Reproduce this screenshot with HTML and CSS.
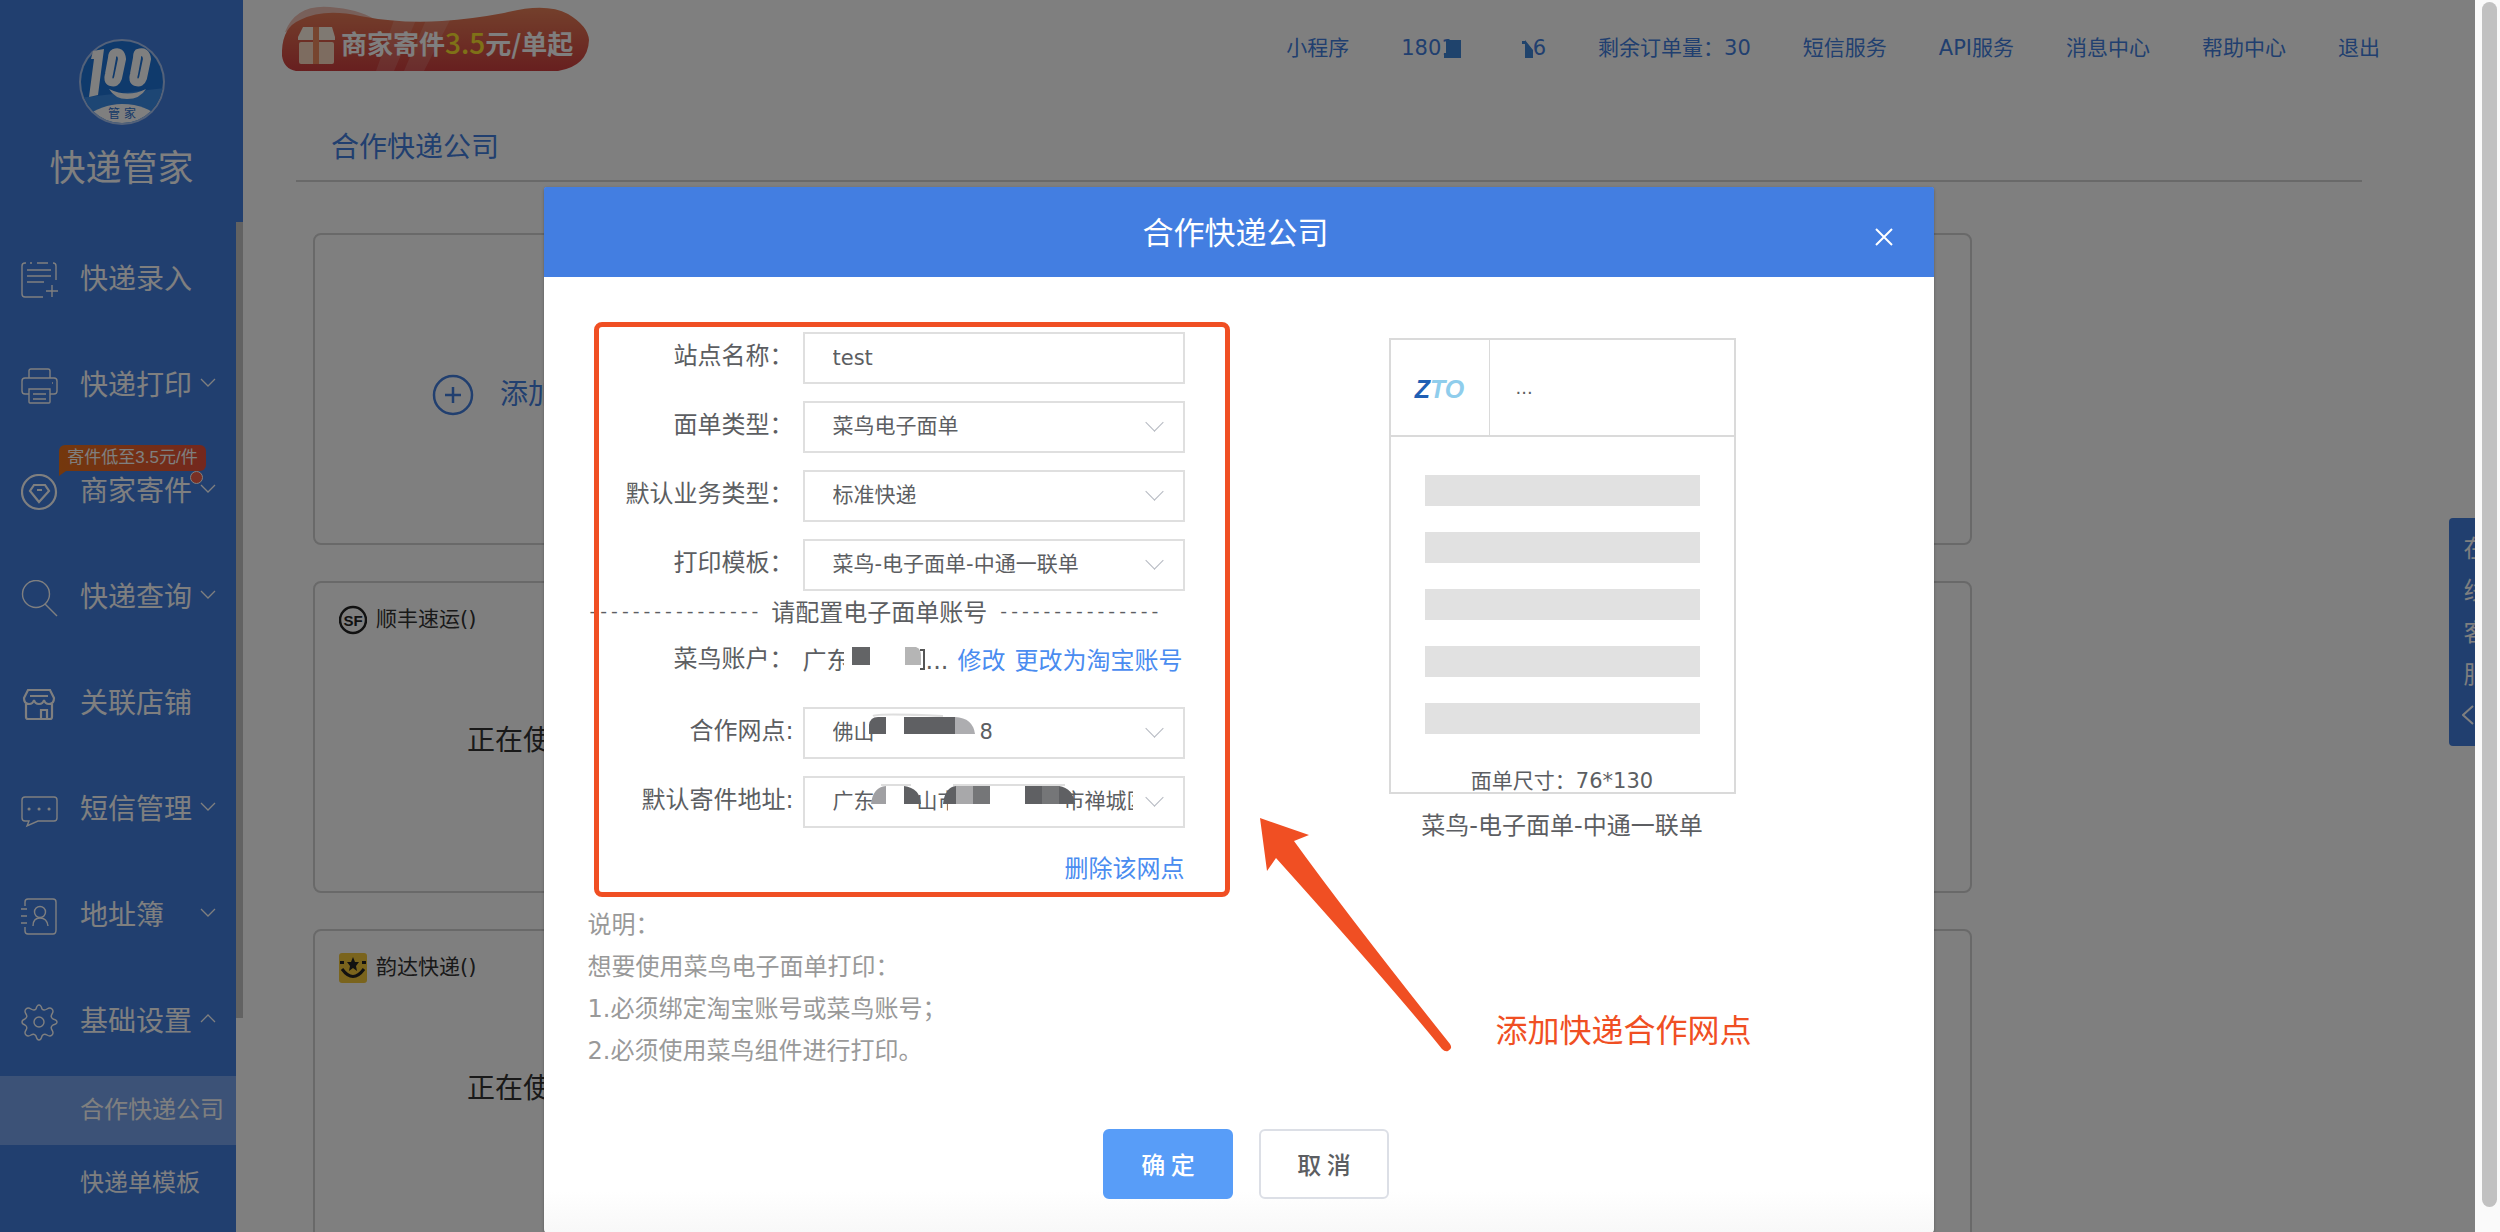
FILE: index.html
```
<!DOCTYPE html>
<html lang="zh-CN">
<head>
<meta charset="utf-8">
<title>快递管家</title>
<link rel="stylesheet" href="styles.css">
</head>
<body>
<div class="viewport">
  <aside class="sidebar">
    <div class="brand">
      <svg class="brand-logo" viewBox="0 0 88 88" aria-hidden="true">
        <defs><clipPath id="disc"><circle cx="44" cy="44" r="41"/></clipPath></defs>
        <circle cx="44" cy="44" r="43" fill="#a9c4f3"/>
        <g clip-path="url(#disc)">
          <rect width="88" height="88" fill="#1f74d8"/>
          <path d="M0 60 L88 50 V88 H0Z" fill="#3b8ce8"/>
          <path d="M44 66 C62 66 72 72 80 78 L70 92 H18 L8 78 C18 71 30 66 44 66Z" fill="#fff"/>
        </g>
        <path d="M15 13 L26 11 L20 57 L11 59 L16 21 H13Z" fill="#fff"/>
        <path d="M36 15 Q43 12 44 21 L40 40 Q38 46 33 44 Q29 43 31 36 L34 20Q34 16 36 15Z M60 15 Q68 12 69 21 L65 40 Q63 46 58 44 Q54 43 56 36 L59 20Q59 16 60 15Z" fill="none" stroke="#fff" stroke-width="8"/>
        <path d="M31 51 Q50 60 68 51 Q62 61 49 61 Q37 61 31 51Z" fill="#fff"/>
        <text x="44" y="80" class="brand-sub">管 家</text>
      </svg>
      <h1 class="brand-name">快递管家</h1>
    </div>
    <div class="nav-scroll">
      <nav class="nav">
        <a class="nav-item" href="#"><svg class="icon" viewBox="0 0 38 38"><path d="M35 18V4Q35 1 32 1M27 1H16M11 1H9M5 1H4Q1 1 1 4V32Q1 35 4 35H22M6 8H30M6 14H30M6 20H23M31 23V35M25 29H37"/></svg><span>快递录入</span></a>
        <a class="nav-item" href="#"><svg class="icon" viewBox="0 0 38 38"><path d="M8 10V3Q8 1 10 1H27Q29 1 29 3V10M8 26H4Q1 26 1 23V13Q1 10 4 10H33Q36 10 36 13V23Q36 26 33 26H29M8 21H29V34Q29 35 28 35H9Q8 35 8 34ZM12 26H25M12 31H25M31 15H32"/></svg><span>快递打印</span><svg class="chev" viewBox="0 0 16 9"><path d="M1 1L8 8L15 1"/></svg></a>
        <a class="nav-item" href="#"><svg class="icon bold" viewBox="0 0 38 38"><circle cx="18" cy="18" r="17"/><path d="M13 11H24L28 17L18 28L9 17ZM16 16H21"/></svg><span>商家寄件</span><svg class="chev" viewBox="0 0 16 9"><path d="M1 1L8 8L15 1"/></svg><b class="promo">寄件低至3.5元/件</b><i class="dot"></i></a>
        <a class="nav-item" href="#"><svg class="icon" viewBox="0 0 38 38"><circle cx="15" cy="14" r="13.5"/><path d="M24 24L36 36"/></svg><span>快递查询</span><svg class="chev" viewBox="0 0 16 9"><path d="M1 1L8 8L15 1"/></svg></a>
        <a class="nav-item" href="#"><svg class="icon bold" viewBox="0 0 38 38"><path d="M7 4H29L33 12Q33 18 28 18Q24 18 23 14Q22 18 18 18Q14 18 13 14Q12 18 8 18Q3 18 3 12ZM5 18V31Q5 33 7 33H29Q31 33 31 31V18M9 10H27M20 32V24H26V32"/></svg><span>关联店铺</span></a>
        <a class="nav-item" href="#"><svg class="icon" viewBox="0 0 38 38"><path d="M4 5H33Q36 5 36 8V26Q36 29 33 29H17L6 34L8 29H4Q1 29 1 26V8Q1 5 4 5Z"/><path class="dots" d="M8 17H8.1M18 17H18.1M28 17H28.1"/></svg><span>短信管理</span><svg class="chev" viewBox="0 0 16 9"><path d="M1 1L8 8L15 1"/></svg></a>
        <a class="nav-item" href="#"><svg class="icon" viewBox="0 0 38 38"><path d="M4 8V4Q4 1 7 1H32Q35 1 35 4V32Q35 36 32 36H7Q4 36 4 33V29M0 11H6M0 18H6M0 25H6M12 28Q12 20 19 20Q26 20 27 28"/><circle cx="19" cy="14" r="5.5"/></svg><span>地址簿</span><svg class="chev" viewBox="0 0 16 9"><path d="M1 1L8 8L15 1"/></svg></a>
        <a class="nav-item" href="#"><svg class="icon" viewBox="0 0 38 38"><circle cx="18" cy="18" r="5"/><path d="M15 5Q16 1 18 1Q20 1 21 5Q23 7 26 5Q29 3 31 5Q33 7 31 10Q29 13 32 15Q36 16 36 18Q36 20 32 21Q29 23 31 26Q33 29 31 31Q29 33 26 31Q23 29 21 32Q20 36 18 36Q16 36 15 32Q13 29 10 31Q7 33 5 31Q3 29 5 26Q7 23 4 21Q1 20 1 18Q1 16 4 15Q7 13 5 10Q3 7 5 5Q7 3 10 5Q13 7 15 5Z"/></svg><span>基础设置</span><svg class="chev" viewBox="0 0 16 9"><path d="M1 8L8 1L15 8"/></svg></a>
        <a class="nav-sub active" href="#">合作快递公司</a>
        <a class="nav-sub" href="#">快递单模板</a>
      </nav>
      <div class="nav-track"><div class="nav-thumb"></div></div>
    </div>
  </aside>

  <main class="main">
    <header class="topbar">
      <a class="banner" href="#">
        <svg class="banner-bg" viewBox="0 0 308 66" aria-hidden="true">
          <defs><linearGradient id="bg" x1="0" y1="0" x2="0" y2="1"><stop offset="0" stop-color="#e88058"/><stop offset="1" stop-color="#cf3f3f"/></linearGradient></defs>
          <path d="M3 26Q14 -2 48 1Q76 3 92 13L30 20Z" fill="#e79684" opacity=".6"/>
          <path d="M0 50Q-1 22 18 14Q42 2 78 10Q120 18 160 15Q190 13 222 7Q264 -4 286 8Q306 20 307 34Q306 60 276 65H14Q2 63 0 50Z" fill="url(#bg)"/>
          <path d="M112 14H134L112 65H94ZM144 14H168L142 65H122Z" fill="#fff" opacity=".14"/>
          <path d="M21 21H50L53 31V34H16V31Z" fill="#fff3e4"/><rect x="17" y="36" width="35" height="22" rx="2" fill="#fbd9c0"/><rect x="31" y="21" width="6" height="37" fill="#ef8a5f"/>
        </svg>
        <span class="banner-text">商家寄件<em>3.5</em>元/单起</span>
      </a>
      <nav class="links">
        <a href="#">小程序</a>
        <a class="phone" href="#"><span>1801</span><svg class="mask" viewBox="0 0 78 20" aria-hidden="true"><path d="M-9 1H6V19H-11V14H-9Z" fill="#3f86d8"/><path d="M67 2H70V1L78 11V19H70V5H67Z" fill="#3f86d8"/></svg><span>6</span></a>
        <a href="#">剩余订单量：30</a>
        <a href="#">短信服务</a>
        <a href="#">API服务</a>
        <a href="#">消息中心</a>
        <a href="#">帮助中心</a>
        <a href="#">退出</a>
      </nav>
    </header>
    <h2 class="page-title">合作快递公司</h2>
    <div class="cards">
      <section class="card add"><svg viewBox="0 0 42 42" aria-hidden="true"><circle cx="21" cy="21" r="19"/><path d="M21 13V29M13 21H29"/></svg><span>添加</span></section>
      <section class="card"></section>
      <section class="card"></section>
      <section class="card">
        <h3 class="company"><svg viewBox="0 0 28 30" aria-hidden="true"><circle cx="14" cy="15" r="13" fill="none" stroke="#222" stroke-width="2.5"/><text x="14" y="21" class="sf">SF</text></svg>顺丰速运()</h3>
        <p class="state">正在使</p>
      </section>
      <section class="card"></section>
      <section class="card"></section>
      <section class="card">
        <h3 class="company"><svg viewBox="0 0 28 30" aria-hidden="true"><rect width="28" height="30" rx="3" fill="#f4c93b"/><path d="M14 4L16 9H20L17 13L18 18L14 15L10 18L11 13L8 9H12ZM1 8H5V11H1ZM23 8H27V11H23Z" fill="#222"/><path d="M3 16Q14 31 25 16" fill="none" stroke="#222" stroke-width="3"/></svg>韵达快递()</h3>
        <p class="state">正在使</p>
      </section>
      <section class="card"></section>
      <section class="card"></section>
    </div>
  </main>

  <button class="service" type="button"><span>在线客服</span><svg viewBox="0 0 12 20" aria-hidden="true"><path d="M11 1L1 10L11 19"/></svg></button>

  <div class="overlay">
    <div class="modal" role="dialog" aria-labelledby="dlg-title">
      <header class="modal-head">
        <h2 id="dlg-title">合作快递公司</h2>
        <button class="close" type="button" aria-label="关闭"><svg viewBox="0 0 18 18"><path d="M1 1L17 17M17 1L1 17"/></svg></button>
      </header>
      <div class="modal-body">
        <form class="form">
          <div class="fields">
            <div class="row"><label for="site">站点名称：</label><input id="site" class="control" type="text" value="test"></div>
            <div class="row"><label for="type">面单类型：</label><div class="pick"><select id="type" class="control"><option>菜鸟电子面单</option></select></div></div>
            <div class="row"><label for="biz">默认业务类型：</label><div class="pick"><select id="biz" class="control"><option>标准快递</option></select></div></div>
            <div class="row"><label for="tpl">打印模板：</label><div class="pick"><select id="tpl" class="control"><option>菜鸟-电子面单-中通一联单</option></select></div></div>
          </div>
          <p class="divider"><span class="dash">----------------</span><span>请配置电子面单账号</span><span class="dash">---------------</span></p>
          <div class="row account"><span class="caption">菜鸟账户：</span><div class="account-value"><span class="cut">广东</span><svg viewBox="0 0 82 24" aria-hidden="true"><path d="M8 0H26V18H8Z" fill="#636466"/><path d="M61 0H72Q77 2 77 8V18H61Z" fill="#b5b5b5"/><path d="M76 3H80V22H76" fill="none" stroke="#555" stroke-width="2"/></svg><span>...</span><a href="#">修改</a><a href="#">更改为淘宝账号</a></div></div>
          <div class="fields">
            <div class="row"><label for="net">合作网点:</label><div class="pick"><select id="net" class="control"><option>佛山　　　　　8</option></select>
              <svg class="mosaic" viewBox="0 0 382 52" aria-hidden="true"><path d="M66 27V18Q67 10 75 10H83V27ZM101 10H152V27H101Z" fill="#5f6063"/><path d="M152 10Q170 11 172 27H152Z" fill="#adadb0"/><path d="M70 9Q75 6 140 9" fill="none" stroke="#dedede" stroke-width="2"/></svg></div></div>
            <div class="row"><label for="addr">默认寄件地址:</label><div class="pick"><select id="addr" class="control"><option>广东　　山市　　　　　市禅城区</option></select>
              <svg class="mosaic" viewBox="0 0 382 52" aria-hidden="true"><path d="M83 10H101V28H83ZM187 10H222V28H187ZM145 28H160V40H145Z" fill="#fff"/><path d="M68 28Q70 11 83 10V28Z" fill="#a0a0a3"/><path d="M101 10Q117 12 118 28H101ZM140 28Q142 11 153 10V28ZM222 10H239V28H222ZM256 10Q270 12 272 28H256Z" fill="#5f6063"/><path d="M153 10H170V28H153Z" fill="#a8a8aa"/><path d="M170 10H187V28H170ZM239 10H256V28H239Z" fill="#757678"/><path d="M78 9H108M150 9H262" stroke="#dedede" stroke-width="2"/></svg></div></div>
          </div>
          <a class="remove" href="#">删除该网点</a>
          <div class="notes">
            <p>说明：</p>
            <p>想要使用菜鸟电子面单打印：</p>
            <p>1.必须绑定淘宝账号或菜鸟账号；</p>
            <p>2.必须使用菜鸟组件进行打印。</p>
          </div>
          <div class="highlight"></div>
        </form>
        <figure class="preview">
          <div class="sheet">
            <div class="sheet-head"><div class="zto"><b>Z</b><b>TO</b></div><div class="sheet-name">...</div></div>
            <div class="bars"><i></i><i></i><i></i><i></i><i></i></div>
            <p class="size">面单尺寸：76*130</p>
          </div>
          <figcaption>菜鸟-电子面单-中通一联单</figcaption>
        </figure>
        <div class="callout">
          <svg viewBox="0 0 194 236" aria-hidden="true"><path d="M0 0L49 17L34 23Q92 103 190 226Q193 231 188 233Q185 234 182 231Q138 176 16 40L7 53Z" fill="#f04f23"/></svg>
          <span>添加快递合作网点</span>
        </div>
      </div>
      <footer class="modal-foot">
        <button class="btn primary" type="button">确 定</button>
        <button class="btn" type="button">取 消</button>
      </footer>
    </div>
  </div>
</div>
<div class="page-scroll"><div class="page-thumb"></div></div>
</body>
</html>
```
FILE: styles.css
```
* { box-sizing: border-box; }
html, body { height: 100%; }
body {
  margin: 0;
  display: flex;
  overflow: hidden;
  background: #fff;
  color: #333;
  font: 24px/1.2 "DejaVu Sans", "Noto Sans CJK SC", sans-serif;
}
a { color: inherit; text-decoration: none; }
h1, h2, h3, p, figure { margin: 0; font-weight: 400; }
button, input, select { font: inherit; color: inherit; }
svg { display: block; flex: none; }

.viewport { position: relative; flex: 1; display: flex; height: 100vh; overflow: hidden; }

/* sidebar */
.sidebar { width: 243px; flex: none; display: flex; flex-direction: column; background: #427edf; color: #fff; }
.brand { height: 222px; flex: none; display: flex; flex-direction: column; align-items: center; padding-top: 38px; }
.brand-logo { width: 88px; height: 88px; }
.brand-sub { font-size: 12px; fill: #2a6fd0; text-anchor: middle; }
.brand-name { margin-top: 17px; font-size: 36px; line-height: 52px; }
.nav-scroll { flex: 1; display: flex; min-height: 0; }
.nav { flex: 1; padding-top: 6px; overflow: hidden; }
.nav-item { position: relative; height: 106px; display: flex; align-items: center; padding: 0 20px 0 21px; font-size: 28px; }
.nav-item span { width: 114px; margin-left: 21px; padding-bottom: 2px; }
.icon { width: 38px; height: 38px; fill: none; stroke: #fff; stroke-width: 1.4; }
.icon.bold { stroke-width: 2.2; }
.icon .dots { stroke-width: 3; stroke-linecap: round; }
.chev { width: 16px; height: 9px; margin: 0 0 10px 6px; fill: none; stroke: #fff; stroke-width: 1.3; }
.promo {
  position: absolute; left: 59px; top: 5px; width: 147px; height: 26px;
  background: linear-gradient(90deg, #e8701a, #e8503c); border-radius: 6px 6px 6px 0;
  font: 17px/26px "Liberation Sans", "Noto Sans CJK SC", sans-serif; text-align: center;
}
.promo::after { content: ""; position: absolute; left: 0; top: 26px; border-top: 5px solid #e8701a; border-right: 7px solid transparent; }
.dot { position: absolute; left: 190px; top: 31px; width: 13px; height: 13px; border-radius: 50%; background: #f2604a; border: 1px solid #fff; }
.nav-sub { display: flex; align-items: center; height: 69px; margin-bottom: 4px; padding-left: 80px; white-space: nowrap; }
.nav-sub.active { background: #79a5ee; }
.nav-track { width: 7px; background: #fff; }
.nav-thumb { height: 80%; max-height: 796px; background: #c4c4c4; }

/* page behind the dialog */
.main { flex: 1; min-width: 0; }
.topbar { height: 114px; display: flex; justify-content: space-between; padding: 6px 95px 0 39px; }
.banner { position: relative; width: 308px; height: 66px; color: #fff; }
.banner-bg { width: 308px; height: 66px; }
.banner-text { position: absolute; left: 59px; top: 19px; font: bold 26px/34px "Noto Sans CJK SC", sans-serif; white-space: nowrap; }
.banner-text em { font-style: normal; font-weight: 500; color: #ffe42e; font-size: 28px; }
.links { display: flex; gap: 52px; height: 86px; align-items: center; font-size: 21px; color: #427edf; white-space: nowrap; }
.phone { display: flex; align-items: center; }
.mask { width: 78px; height: 20px; overflow: visible; }
.page-title { height: 68px; margin: 0 113px 0 53px; padding-left: 35px; border-bottom: 2px solid #d2d2d2; font-size: 28px; line-height: 68px; color: #427edf; }
.cards { display: grid; grid-template-columns: repeat(3, 1fr); gap: 36px; max-width: 1659px; margin: 51px 0 0 70px; }
.card { height: 312px; border: 2px solid #d2d2d2; border-radius: 8px; padding: 22px 24px; }
.card.add { display: flex; align-items: center; gap: 26px; padding: 12px 0 0 117px; font-size: 28px; color: #427edf; }
.card.add svg { width: 42px; height: 42px; fill: none; stroke: #427edf; stroke-width: 2.5; }
.company { display: flex; align-items: center; gap: 9px; font-size: 21px; }
.company svg { width: 28px; height: 30px; }
.sf { font: bold 15px "Liberation Sans", sans-serif; fill: #222; text-anchor: middle; }
.state { padding: 89px 0 0 128px; font-size: 28px; }
.service {
  position: absolute; right: -24px; top: 518px; width: 50px; height: 228px; border: 0; border-radius: 4px;
  background: #427edf; color: #fff; display: flex; flex-direction: column; align-items: flex-start; padding: 10px 0 0 13px;
}
.service span { width: 26px; line-height: 42px; padding-left: 1px; text-align: center; word-break: break-all; }
.service svg { width: 12px; height: 20px; margin-top: 9px; fill: none; stroke: #fff; stroke-width: 2; }

/* dialog */
.overlay { position: absolute; inset: 0; display: flex; justify-content: center; align-items: flex-start; padding: 187px 0 0 2px; background: rgba(0, 0, 0, .5); }
.modal { width: 90%; max-width: 1390px; background: linear-gradient(#fff 96%, #f8f8f8); border-radius: 4px; box-shadow: 0 1px 3px rgba(0, 0, 0, .3); color: #5c5e62; }
.modal-head { height: 90px; display: flex; align-items: center; padding: 0 41px; background: #437ee1; color: #fff; border-radius: 2px 2px 0 0; }
.modal-head h2 { flex: 1; padding: 3px 0 0 12px; font-size: 31px; text-align: center; }
.close { border: 0; padding: 0; background: none; margin-top: 9px; }
.close svg { width: 18px; height: 18px; fill: none; stroke: #fff; stroke-width: 2; }
.modal-body { position: relative; display: flex; justify-content: space-between; padding: 55px 198px 0 44px; }
.form { position: relative; width: 597px; display: flex; flex-direction: column; }
.fields { display: flex; flex-direction: column; gap: 17px; }
.row { display: flex; align-items: center; gap: 9px; height: 52px; }
.row label, .caption { width: 206px; text-align: right; white-space: nowrap; padding-bottom: 4px; }
.control { width: 382px; height: 52px; padding: 0 28px; border: 2px solid #dfdfdf; border-radius: 0; background: none; font-size: 21px; outline: 0; }
.pick { position: relative; width: 382px; }
select.control { appearance: none; padding: 0 50px 0 28px; display: block; }
.pick::after { content: ""; position: absolute; right: 24px; top: 15px; width: 12px; height: 12px; border: solid #b4b8c0; border-width: 0 1px 1px 0; transform: rotate(45deg); }
.mosaic { position: absolute; inset: 0; width: 382px; height: 52px; pointer-events: none; }
.divider { display: flex; align-items: center; height: 44px; gap: 11px; white-space: nowrap; }
.dash { font: 18px/24px "Liberation Mono", monospace; }
.account { margin-bottom: 20px; }
.account-value { display: flex; align-items: center; width: 382px; white-space: nowrap; }
.account-value svg { width: 82px; height: 24px; margin-bottom: 4px; }
.account-value .cut { width: 41px; overflow: hidden; }
.account-value a { margin-left: 9px; color: #4a8cf0; }
.remove { align-self: flex-end; margin-top: 21px; line-height: 40px; color: #4a8cf0; }
.notes { margin-top: 15px; line-height: 42px; color: #999; }
.highlight { position: absolute; left: 6px; right: -45px; top: -10px; height: 575px; border: 5px solid #f04f23; border-radius: 8px; pointer-events: none; }
.preview { width: 347px; padding-top: 6px; text-align: center; }
.sheet { height: 456px; border: 2px solid #dadada; }
.sheet-head { display: flex; height: 97px; border-bottom: 2px solid #dadada; }
.zto { width: 99px; display: flex; align-items: center; justify-content: center; padding-top: 3px; border-right: 1px solid #dadada; font: italic bold 25px "Liberation Sans", sans-serif; color: #8fcdec; }
.zto b:first-child { color: #1f5fb4; }
.sheet-name { padding: 37px 0 0 26px; font-size: 18px; }
.bars { display: grid; gap: 26px; padding: 38px 34px 0; }
.bars i { height: 31px; background: #e1e1e1; }
.size { padding-top: 34px; font-size: 21px; line-height: 26px; }
.preview figcaption { padding-top: 15px; line-height: 34px; white-space: nowrap; }
.callout { position: absolute; left: 716px; top: 541px; display: flex; align-items: flex-end; gap: 42px; color: #f04f23; font-size: 32px; white-space: nowrap; }
.callout svg { width: 194px; height: 236px; }
.callout span { line-height: 38px; padding-bottom: 4px; }
.modal-foot { display: flex; justify-content: center; gap: 26px; padding: 57px 0 34px 15px; }
.btn { width: 130px; height: 70px; border: 2px solid #dcdfe6; border-radius: 6px; background: #fff; font-family: "Noto Sans CJK SC", sans-serif; font-weight: 500; word-spacing: normal; padding: 0; }
.btn.primary { background: #589df8; border-color: #589df8; color: #fff; }

/* page scrollbar */
.page-scroll { width: 25px; flex: none; padding: 2px 3px 0 7px; background: #fafafa; }
.page-thumb { height: 98%; border-radius: 8px; background: #c1c1c1; }
```
